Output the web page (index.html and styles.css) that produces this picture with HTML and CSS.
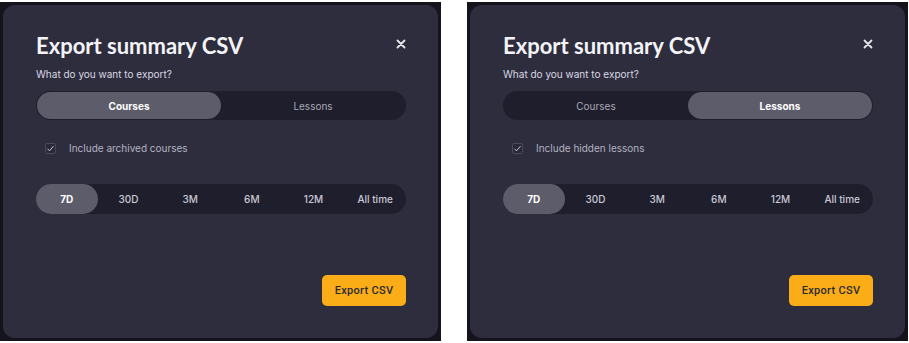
FILE: index.html
```html
<!DOCTYPE html>
<html lang="en">
<head>
    <meta charset="UTF-8">
    <meta name="viewport" content="width=device-width, initial-scale=1.0">
    <title>Export summary CSV</title>
    <link rel="stylesheet" href="styles.css">
</head>
<body>
    <div class="shots">
        <!-- Courses tab -->
        <div class="frame">
            <div class="modal">
                <div class="modal-head">
                    <h1>Export summary CSV</h1>
                    <button class="close" aria-label="Close">
                        <svg width="10" height="10" viewBox="0 0 10 10"><path d="M1.5 1.5l7 7M8.5 1.5l-7 7" stroke="#e6e6ee" stroke-width="1.8" stroke-linecap="round"/></svg>
                    </button>
                </div>
                <p class="question">What do you want to export?</p>
                <div class="seg">
                    <button class="seg-btn active">Courses</button>
                    <button class="seg-btn">Lessons</button>
                </div>
                <label class="check">
                    <span class="box"><svg width="9" height="9" viewBox="0 0 9 9"><path d="M1.5 4.8l2 2 4-4.6" fill="none" stroke="#c9c8d4" stroke-width="1"/></svg></span>
                    Include archived courses
                </label>
                <div class="periods">
                    <button class="period active">7D</button>
                    <button class="period">30D</button>
                    <button class="period">3M</button>
                    <button class="period">6M</button>
                    <button class="period">12M</button>
                    <button class="period">All time</button>
                </div>
                <div class="modal-foot">
                    <button class="export">Export CSV</button>
                </div>
            </div>
        </div>

        <!-- Lessons tab -->
        <div class="frame">
            <div class="modal">
                <div class="modal-head">
                    <h1>Export summary CSV</h1>
                    <button class="close" aria-label="Close">
                        <svg width="10" height="10" viewBox="0 0 10 10"><path d="M1.5 1.5l7 7M8.5 1.5l-7 7" stroke="#e6e6ee" stroke-width="1.8" stroke-linecap="round"/></svg>
                    </button>
                </div>
                <p class="question">What do you want to export?</p>
                <div class="seg">
                    <button class="seg-btn">Courses</button>
                    <button class="seg-btn active">Lessons</button>
                </div>
                <label class="check">
                    <span class="box"><svg width="9" height="9" viewBox="0 0 9 9"><path d="M1.5 4.8l2 2 4-4.6" fill="none" stroke="#c9c8d4" stroke-width="1"/></svg></span>
                    Include hidden lessons
                </label>
                <div class="periods">
                    <button class="period active">7D</button>
                    <button class="period">30D</button>
                    <button class="period">3M</button>
                    <button class="period">6M</button>
                    <button class="period">12M</button>
                    <button class="period">All time</button>
                </div>
                <div class="modal-foot">
                    <button class="export">Export CSV</button>
                </div>
            </div>
        </div>
    </div>
</body>
</html>
```

FILE: styles.css
```css
body { margin: 0; background: #fff; font-family: Inter, "Noto Sans", sans-serif; }
.shots { display: flex; gap: 26px; padding-top: 2px; }
.frame { width: 441px; height: 339px; box-sizing: border-box; padding: 3px; background: #15141c; }
.modal { height: 333px; box-sizing: border-box; padding: 26px 32px 32px 33px; background: #2e2d3e; border-radius: 12px; display: flex; flex-direction: column; }

.modal-head { display: flex; justify-content: space-between; align-items: flex-start; }
.modal-head h1 { margin: 0; font-family: Lato, sans-serif; font-size: 22px; font-weight: 700; line-height: 30px; color: #f4f4f8; }
.close { background: none; border: 0; padding: 0; margin: 8px 0 0; width: 10px; height: 10px; cursor: pointer; display: flex; }

.question { margin: 6px 0 0; font-size: 10px; line-height: 14px; color: #d8d7e2; }

button { font-family: inherit; cursor: pointer; }

.seg { margin-top: 10px; display: grid; grid-template-columns: 1fr 1fr; height: 29px; padding: 1px; box-sizing: border-box; background: #1f1e2c; border-radius: 15px; }
.seg-btn { border: 0; background: none; border-radius: 14px; font-size: 10px; color: #a9a8b6; }
.seg-btn.active { background: #5d5c6a; color: #fff; font-weight: 700; }

.check { margin: 22px 0 0 9px; display: flex; align-items: center; gap: 13px; font-size: 10px; color: #b3b2c0; }
.box { width: 11px; height: 11px; box-sizing: border-box; border: 1px solid #4a495b; border-radius: 2px; background: #2a2938; display: flex; align-items: center; justify-content: center; }

.periods { margin-top: 30px; display: grid; grid-template-columns: repeat(6, 1fr); height: 30px; background: #1f1e2c; border-radius: 15px; }
.period { border: 0; background: none; border-radius: 15px; font-size: 10px; font-weight: 500; color: #c9c8d4; }
.period.active { background: #5d5c6a; color: #fff; font-weight: 700; }

.modal-foot { margin-top: auto; display: flex; justify-content: flex-end; }
.export { width: 84px; height: 31px; border: 0; border-radius: 5px; background: #fbad18; color: #2b2a33; font-family: Roboto, sans-serif; font-size: 11px; font-weight: 500; letter-spacing: 0.3px; }
```
